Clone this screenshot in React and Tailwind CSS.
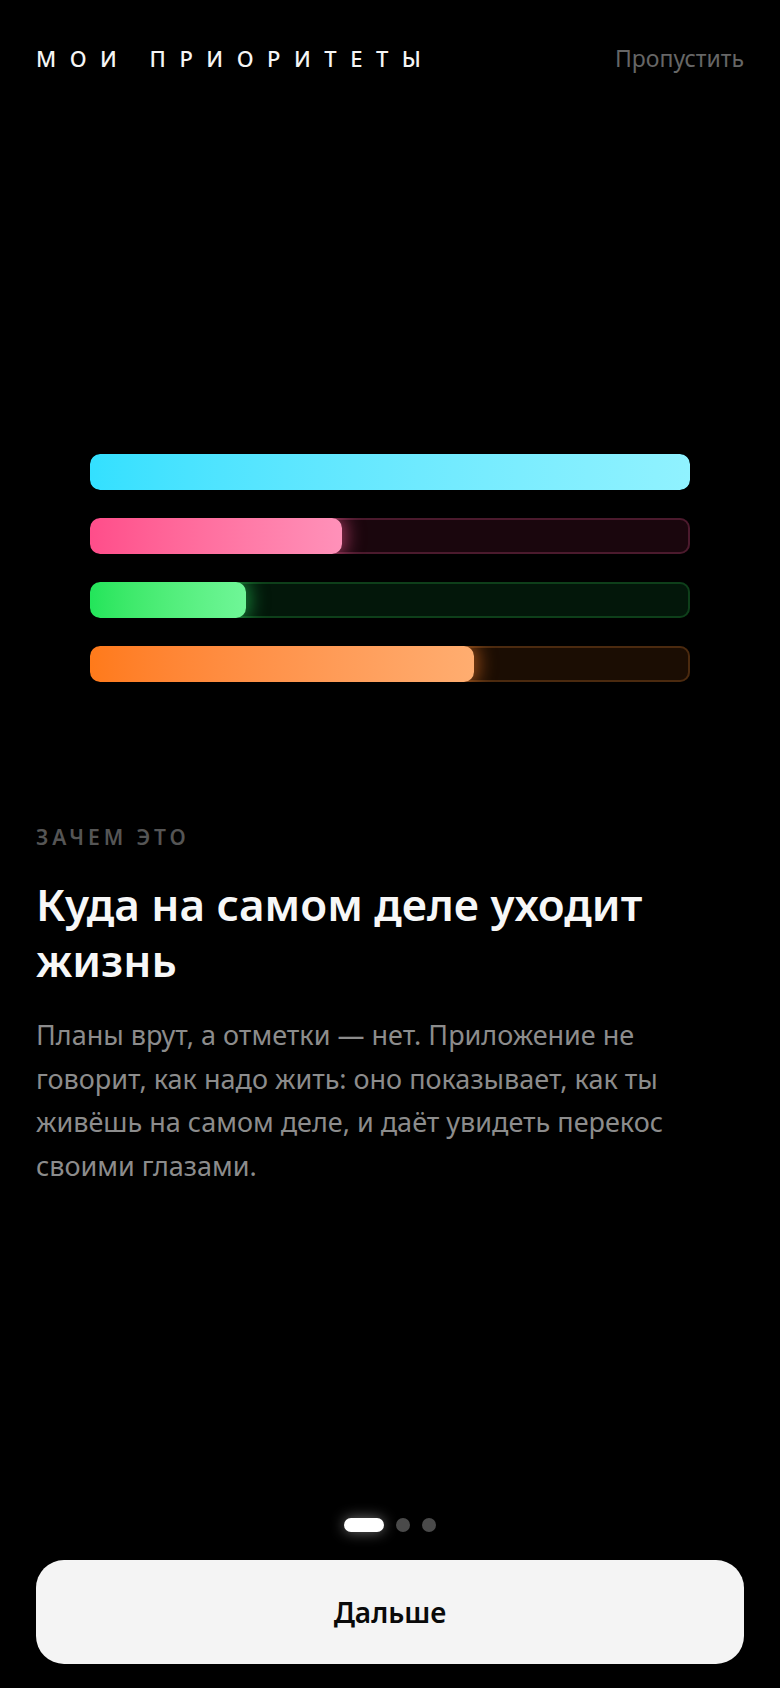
import React from "react";

const bars = [
  { value: 100, fill: "bg-gradient-to-r from-[#33e0ff] to-[#90f2ff]", track: "bg-[#04161a] shadow-[inset_0_0_0_2px_#0d3d47]", glow: "shadow-none" },
  { value: 42, fill: "bg-gradient-to-r from-[#ff4d8a] to-[#ff91b9]", track: "bg-[#1a060d] shadow-[inset_0_0_0_2px_#4b1a2d]", glow: "shadow-[0_0_18px_4px_rgba(255,90,150,0.55)]" },
  { value: 26, fill: "bg-gradient-to-r from-[#22e55a] to-[#6ff697]", track: "bg-[#03170a] shadow-[inset_0_0_0_2px_#0e3f1a]", glow: "shadow-[0_0_18px_4px_rgba(40,230,100,0.5)]" },
  { value: 64, fill: "bg-gradient-to-r from-[#ff7a1a] to-[#ffad70]", track: "bg-[#1b0d03] shadow-[inset_0_0_0_2px_#4b2a0f]", glow: "shadow-[0_0_18px_4px_rgba(255,130,40,0.55)]" },
];

export default function App() {
  return (
    <div
      className="flex min-h-screen flex-col bg-black text-white"
      style={{ fontFamily: '"Noto Sans", "Open Sans", sans-serif' }}
    >
      {/* header */}
      <div className="mt-[30px] flex h-[56px] items-center justify-between px-[36px]">
        <span className="text-[22px] font-medium leading-none tracking-[13.5px] text-[#f5f5f5]">
          МОИ ПРИОРИТЕТЫ
        </span>
        <button className="text-[23px] leading-none text-[#666666]">Пропустить</button>
      </div>

      {/* bars */}
      <div className="mt-[368px] flex flex-col gap-[28px] px-[90px]">
        {bars.map((bar, i) => (
          <div key={i} className={`relative h-[36px] overflow-hidden rounded-[10px] ${bar.track}`}>
            <div
              className={`h-full rounded-[10px] ${bar.fill} ${bar.glow}`}
              style={{ width: `${bar.value}%` }}
            />
          </div>
        ))}
      </div>

      {/* text */}
      <div className="mt-[141px] px-[36px]">
        <p className="text-[21px] font-semibold leading-[28px] tracking-[4px] text-[#555555]">ЗАЧЕМ ЭТО</p>
        <h1 className="mt-[25px] text-[44px] font-semibold leading-[56px] text-[#f7f7f7]">
          Куда на самом деле уходит жизнь
        </h1>
        <p className="mt-[25px] pr-[20px] text-[27px] leading-[43.5px] text-[#8c8c8c]">
          Планы врут, а отметки — нет. Приложение не говорит, как надо жить: оно показывает, как ты
          живёшь на самом деле, и даёт увидеть перекос своими глазами.
        </p>
      </div>

      {/* footer */}
      <div className="mt-auto flex flex-col items-center px-[36px] pb-[24px]">
        <div className="flex items-center gap-[12px]">
          <span className="h-[14px] w-[40px] rounded-full bg-white shadow-[0_0_14px_rgba(255,255,255,0.45)]" />
          <span className="h-[14px] w-[14px] rounded-full bg-[#4a4a4a]" />
          <span className="h-[14px] w-[14px] rounded-full bg-[#4a4a4a]" />
        </div>
        <button className="mt-[28px] flex h-[104px] w-full items-center justify-center rounded-[28px] bg-[#f4f4f4] text-[28px] font-semibold text-[#0a0a0a]">
          Дальше
        </button>
      </div>
    </div>
  );
}
